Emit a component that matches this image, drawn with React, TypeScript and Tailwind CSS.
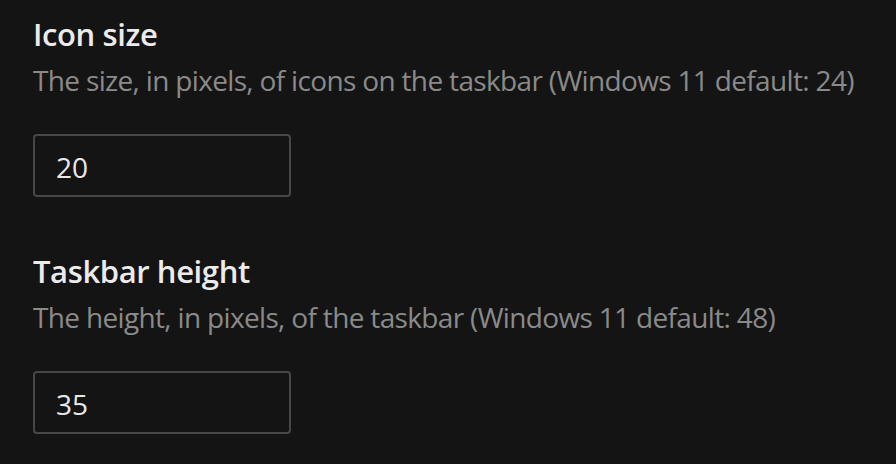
import { useState } from "react";

type Setting = {
  title: string;
  description: string;
  value: string;
};

const SETTINGS: Setting[] = [
  {
    title: "Icon size",
    description: "The size, in pixels, of icons on the taskbar (Windows 11 default: 24)",
    value: "20",
  },
  {
    title: "Taskbar height",
    description: "The height, in pixels, of the taskbar (Windows 11 default: 48)",
    value: "35",
  },
];

export default function App() {
  return (
    <div
      className="min-h-screen w-full bg-[#141414] pl-[33px] pt-[14px]"
      style={{ fontFamily: '"Open Sans", "Noto Sans", sans-serif' }}
    >
      <div className="flex flex-col gap-[54px]">
        {SETTINGS.map((s) => (
          <SettingField key={s.title} setting={s} />
        ))}
      </div>
    </div>
  );
}

function SettingField({ setting }: { setting: Setting }) {
  const [value, setValue] = useState(setting.value);

  return (
    <div className="flex flex-col">
      <div className="text-[31px] leading-[40px] font-semibold text-[#ebebeb] tracking-[-0.4px]">
        {setting.title}
      </div>
      <div className="mt-[8px] text-[28px] leading-[36px] text-[#8a8a8a] tracking-[-0.66px] whitespace-nowrap">
        {setting.description}
      </div>
      <input
        value={value}
        onChange={(e) => setValue(e.target.value)}
        className="mt-[36px] w-[258px] h-[63px] rounded-[4px] border-2 border-[#474747] bg-[#141414] px-[21px] pt-[3px] text-[28px] text-[#e8e8e8] outline-none"
      />
    </div>
  );
}
